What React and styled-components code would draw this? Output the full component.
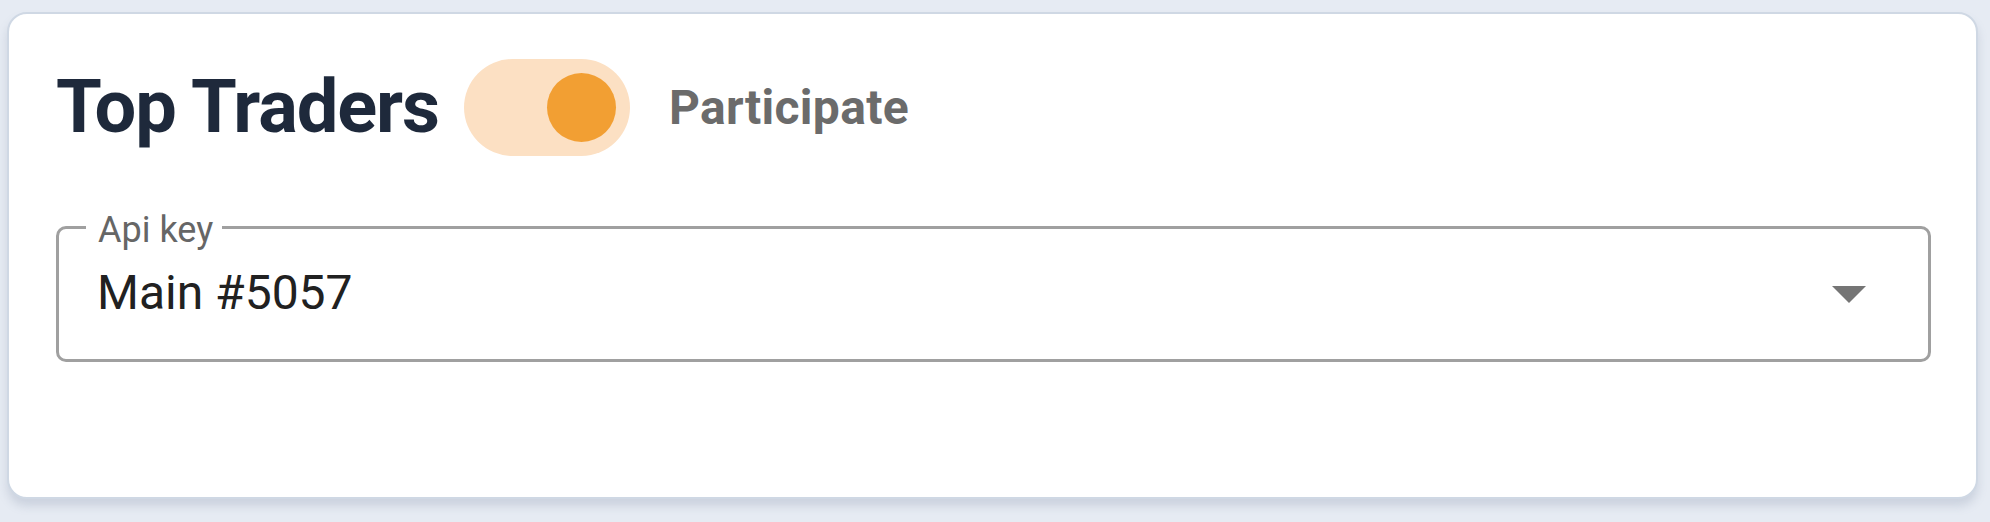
import React, {useState} from 'react';
import styled, {createGlobalStyle} from 'styled-components';

const GlobalStyle = createGlobalStyle`
  html, body {
    margin: 0;
    padding: 0;
    background: #e6ebf3;
    font-family: Roboto, "Liberation Sans", Arial, sans-serif;
  }
`;

const Page = styled.div`
  padding: 12px 12px 23px 7px;
`;

const Card = styled.div`
  box-sizing: border-box;
  background: #ffffff;
  border: 2px solid #cfd8e4;
  border-radius: 20px;
  box-shadow: 0 7px 10px rgba(110, 125, 150, 0.22);
  padding: 45px 45px 135px 47px;
`;

const Header = styled.div`
  display: flex;
  align-items: center;
`;

const Title = styled.h2`
  margin: 0 25px 0 0;
  font-size: 74px;
  line-height: 1.2;
  font-weight: 700;
  color: #1e293b;
  letter-spacing: -1.1px;
`;

const Track = styled.button`
  display: flex;
  align-items: center;
  justify-content: ${p => (p.on ? 'flex-end' : 'flex-start')};
  width: 166px;
  height: 97px;
  padding: 0 14px;
  border: none;
  border-radius: 49px;
  background: ${p => (p.on ? '#fce0c3' : '#e2e2e2')};
  cursor: pointer;
  box-sizing: border-box;
`;

const Thumb = styled.span`
  width: 69px;
  height: 69px;
  border-radius: 50%;
  background: ${p => (p.on ? '#f29f33' : '#fafafa')};
`;

const SwitchLabel = styled.span`
  margin-left: 39px;
  font-size: 48px;
  line-height: 1.2;
  font-weight: 700;
  color: #6b6b6b;
  letter-spacing: 0.3px;
`;

const Field = styled.fieldset`
  margin: 52px 0 0 0;
  padding: 0;
  border: 3px solid #a0a0a0;
  border-radius: 10px;
  min-width: 0;
`;

const Legend = styled.legend`
  margin-left: 27px;
  padding: 5px 9px 0 12px;
  font-size: 36px;
  line-height: 34px;
  color: #666666;
`;

const SelectRow = styled.div`
  display: flex;
  align-items: center;
  justify-content: space-between;
  padding: 17px 62px 37px 38px;
`;

const Value = styled.span`
  font-size: 48px;
  line-height: 1.2;
  color: #212121;
`;

const Arrow = styled.svg`
  width: 34px;
  height: 17px;
  margin-top: 4px;
  fill: #757575;
`;

export default function App() {
    const [on, setOn] = useState(true);

    return (
        <Page>
            <GlobalStyle/>
            <Card>
                <Header>
                    <Title>Top Traders</Title>
                    <Track on={on ? 1 : 0} onClick={() => setOn(!on)}>
                        <Thumb on={on ? 1 : 0}/>
                    </Track>
                    <SwitchLabel>Participate</SwitchLabel>
                </Header>
                <Field>
                    <Legend>Api key</Legend>
                    <SelectRow>
                        <Value>Main #5057</Value>
                        <Arrow viewBox="0 0 34 17">
                            <path d="M0 0 L34 0 L17 17 Z"/>
                        </Arrow>
                    </SelectRow>
                </Field>
            </Card>
        </Page>
    );
}
